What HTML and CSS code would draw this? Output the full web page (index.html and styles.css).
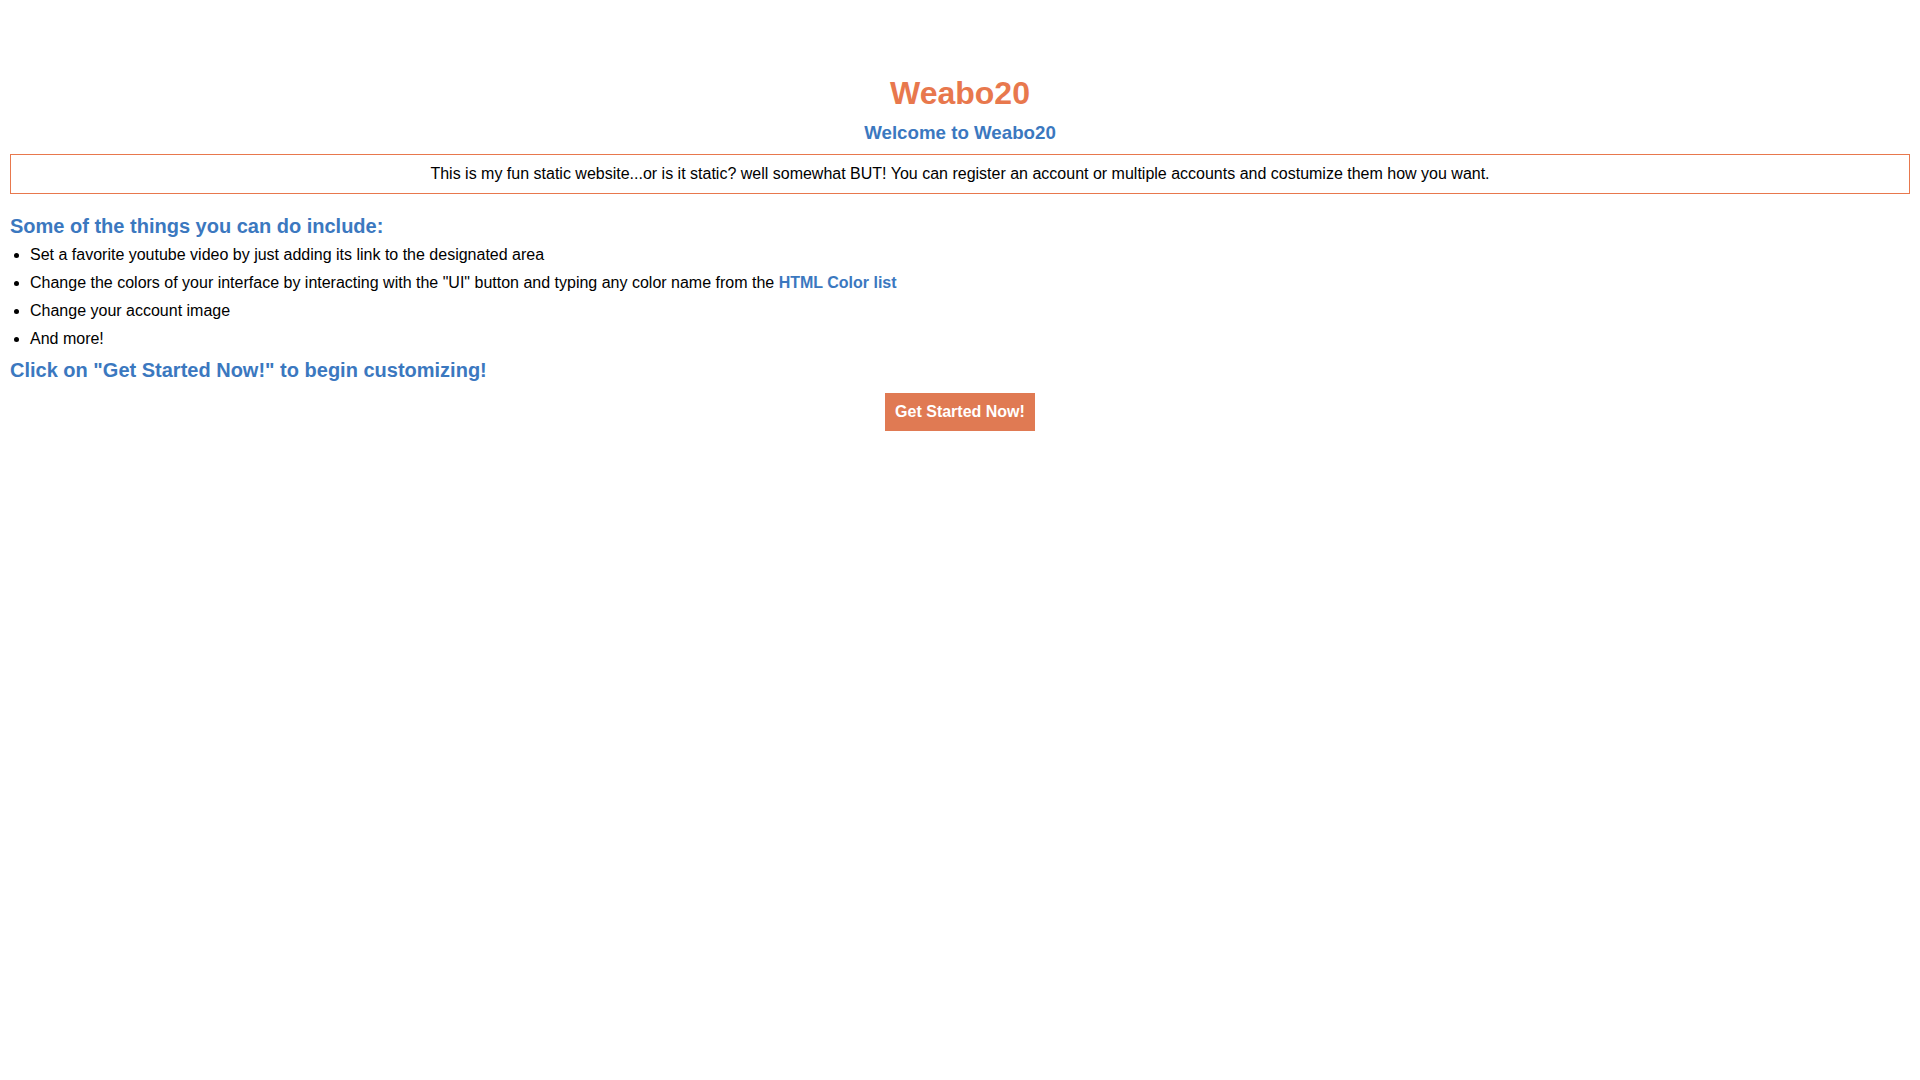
FILE: index.html
```html
<!DOCTYPE html>
<html lang="en">
<head>
<meta charset="utf-8">
<title>Weabo20</title>
<link rel="stylesheet" href="styles.css">
</head>
<body>
<div class="page">
  <header class="hero">
    <h1 class="title">Weabo20</h1>
    <h3 class="subtitle">Welcome to Weabo20</h3>
  </header>
  <p class="intro">This is my fun static website...or is it static? well somewhat BUT! You can register an account or multiple accounts and costumize them how you want.</p>
  <h3 class="section-title">Some of the things you can do include:</h3>
  <ul class="features">
    <li>Set a favorite youtube video by just adding its link to the designated area</li>
    <li>Change the colors of your interface by interacting with the "UI" button and typing any color name from the <a class="link" href="#">HTML Color list</a></li>
    <li>Change your account image</li>
    <li>And more!</li>
  </ul>
  <h3 class="section-title cta-title">Click on "Get Started Now!" to begin customizing!</h3>
  <div class="actions">
    <button class="btn" type="button">Get Started Now!</button>
  </div>
</div>
</body>
</html>
```
FILE: styles.css
```css
html, body {
  margin: 0;
  padding: 0;
  background: #ffffff;
}

body {
  font-family: "Liberation Sans", Arial, sans-serif;
  font-size: 16px;
  color: #000000;
}

.page {
  padding: 0 10px;
}

.hero {
  padding-top: 75px;
  text-align: center;
}

.title {
  margin: 0;
  font-size: 32px;
  font-weight: bold;
  color: #e8784d;
}

.subtitle {
  margin: 10px 0 0;
  font-size: 18.72px;
  font-weight: bold;
  color: #3b78bf;
}

.intro {
  margin: 10px 0 0;
  padding: 10px;
  border: 1px solid #e8784d;
  text-align: center;
}

.section-title {
  margin: 20.5px 0 0;
  font-size: 20px;
  font-weight: bold;
  color: #3b78bf;
}

.features {
  margin: 0;
  padding-left: 20px;
}

.features li {
  margin-top: 10px;
}

.features li:first-child {
  margin-top: 8.8px;
}

.link {
  color: #3b78bf;
  font-weight: bold;
  text-decoration: none;
}

.cta-title {
  margin-top: 11px;
}

.actions {
  display: flex;
  justify-content: center;
  margin-top: 10.4px;
}

.btn {
  font-family: "Liberation Sans", Arial, sans-serif;
  font-size: 16px;
  font-weight: bold;
  color: #ffffff;
  background: #e07a53;
  border: none;
  padding: 10px 10px;
  line-height: 18px;
  cursor: pointer;
}
```
